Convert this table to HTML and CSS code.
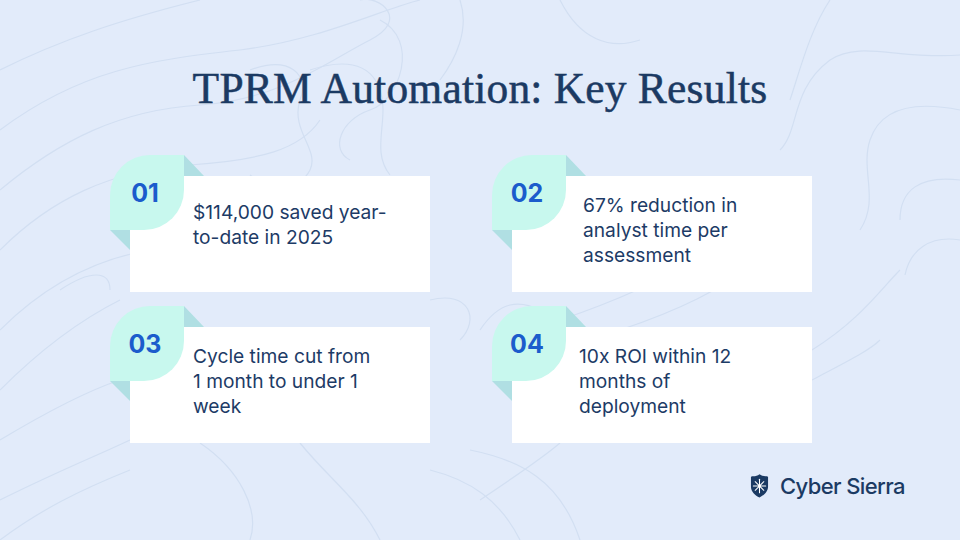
FILE: index.html
```html
<!DOCTYPE html>
<html lang="en">
<head>
<meta charset="utf-8">
<title>TPRM Automation: Key Results</title>
<link rel="stylesheet" href="styles.css">
</head>
<body>
<div class="slide">
  <svg class="contours" viewBox="0 0 960 540" width="960" height="540" aria-hidden="true">
    <g fill="none" stroke="#d2dff2" stroke-width="1.2">
      <path d="M0 70 C60 40 120 20 200 0"/>
      <path d="M0 130 C80 70 150 60 240 50 C320 40 380 10 420 0"/>
      <path d="M0 190 C60 140 120 110 200 105 C280 100 330 60 370 40 C410 20 380 -5 360 0"/>
      <path d="M0 250 C50 200 110 170 190 165 C260 160 300 150 320 120"/>
      <path d="M0 330 C40 290 90 260 150 250"/>
      <path d="M0 390 C40 350 80 320 120 300"/>
      <path d="M0 440 C50 410 90 390 120 380"/>
      <path d="M0 500 C60 470 110 450 130 440"/>
      <path d="M250 70 C290 55 310 75 300 100 C290 130 320 150 310 170 C300 190 270 190 250 175"/>
      <path d="M310 70 C340 60 370 60 380 90 C390 120 370 150 390 175"/>
      <path d="M460 0 C470 30 455 60 440 80"/>
      <path d="M380 20 C420 40 400 100 370 110 C340 120 330 150 350 160"/>
      <path d="M960 55 C900 60 860 40 830 60 C790 90 800 130 780 150"/>
      <path d="M960 110 C910 100 880 110 870 140 C860 170 880 200 860 230"/>
      <path d="M960 180 C920 175 900 190 900 220"/>
      <path d="M960 240 C930 235 910 250 905 275"/>
      <path d="M830 0 C810 30 800 70 790 100"/>
      <path d="M560 0 C580 40 610 50 640 40"/>
      <path d="M430 300 C470 290 480 320 460 340"/>
      <path d="M480 330 C500 300 520 300 540 310"/>
      <path d="M560 320 C620 300 660 280 720 250"/>
      <path d="M620 330 C680 310 720 290 760 260"/>
      <path d="M812 350 C860 320 880 290 900 270"/>
      <path d="M812 380 C850 360 870 350 880 340"/>
      <path d="M430 470 C470 480 500 500 520 540"/>
      <path d="M470 450 C520 460 560 480 580 540"/>
      <path d="M480 500 C510 480 540 460 560 443"/>
      <path d="M0 540 C40 510 80 490 130 470"/>
      <path d="M200 443 C240 470 260 510 250 540"/>
      <path d="M300 443 C330 480 360 500 380 540"/>
      <path d="M60 290 C90 270 110 270 110 290"/>
    </g>
  </svg>

  <h1 class="title">TPRM Automation: Key Results</h1>

  <div class="grid">
    <div class="card card--short">
      <div class="fold fold--top"></div>
      <div class="fold fold--left"></div>
      <div class="badge">01</div>
      <p class="card-text">$114,000 saved year-<br>to-date in 2025</p>
    </div>
    <div class="card card--right">
      <div class="fold fold--top"></div>
      <div class="fold fold--left"></div>
      <div class="badge">02</div>
      <p class="card-text">67% reduction in<br>analyst time per<br>assessment</p>
    </div>
    <div class="card">
      <div class="fold fold--top"></div>
      <div class="fold fold--left"></div>
      <div class="badge">03</div>
      <p class="card-text">Cycle time cut from<br>1 month to under 1<br>week</p>
    </div>
    <div class="card card--right4">
      <div class="fold fold--top"></div>
      <div class="fold fold--left"></div>
      <div class="badge">04</div>
      <p class="card-text">10x ROI within 12<br>months of<br>deployment</p>
    </div>
  </div>

  <div class="logo">
    <svg class="logo-mark" viewBox="0 0 20 25" width="19" height="24" aria-hidden="true">
      <path d="M2 2.2 C5 2.8 7.5 1.6 10 0 C12.5 1.6 15 2.8 18 2.2 L19 3 V13 C19 18.5 14.5 22.5 10 24.5 C5.5 22.5 1 18.5 1 13 V3 Z" fill="#1b3a63"/>
      <g stroke="#ffffff" stroke-width="1.1" stroke-linecap="round">
        <line x1="10" y1="5.5" x2="10" y2="19.5"/>
        <line x1="3.5" y1="12.5" x2="16.5" y2="12.5"/>
        <line x1="5.5" y1="8" x2="14.5" y2="17"/>
        <line x1="14.5" y1="8" x2="5.5" y2="17"/>
      </g>
      <circle cx="10" cy="12.5" r="1.6" fill="#ffffff"/>
    </svg>
    <span class="logo-text">Cyber Sierra</span>
  </div>
</div>
</body>
</html>
```

FILE: styles.css
```css
* { box-sizing: border-box; }

html, body {
  margin: 0;
  padding: 0;
}

body {
  width: 960px;
  height: 540px;
  overflow: hidden;
  font-family: Inter, "Noto Sans", "Liberation Sans", sans-serif;
}

.slide {
  position: relative;
  width: 960px;
  height: 540px;
  background: #e2ebfa;
  overflow: hidden;
  display: flex;
  flex-direction: column;
}

.contours {
  position: absolute;
  left: 0;
  top: 0;
}

.title {
  position: relative;
  margin: 64px 0 0;
  text-align: center;
  font-family: "Liberation Serif", "DejaVu Serif", serif;
  font-weight: 400;
  font-size: 43.5px;
  line-height: 48px;
  color: #1b3a63;
  -webkit-text-stroke: 0.5px #1b3a63;
  letter-spacing: 0.2px;
}

.grid {
  position: relative;
  display: grid;
  grid-template-columns: 300px 300px;
  grid-auto-rows: 116px;
  column-gap: 82px;
  row-gap: 35px;
  margin: 64px 0 0 130px;
}

.card {
  position: relative;
  background: #ffffff;
  padding: 17px 16px 0 63px;
}

.card--short {
  padding-top: 24px;
}

.card--right {
  padding-left: 71px;
}

.card--right4 {
  padding-left: 67px;
}

.badge {
  position: absolute;
  left: -20px;
  top: -21px;
  width: 74px;
  height: 75px;
  background: #c8f8ee;
  border-radius: 40px 0 40px 0;
  display: flex;
  align-items: center;
  justify-content: center;
  padding-right: 4px;
  font-weight: 700;
  font-size: 25px;
  color: #1b5ccc;
  z-index: 2;
}

.fold {
  position: absolute;
  width: 0;
  height: 0;
  z-index: 1;
}

.fold--top {
  left: 54px;
  top: -21px;
  border-left: 20px solid #b0dfe3;
  border-top: 21px solid transparent;
}

.fold--left {
  left: -20px;
  top: 54px;
  border-top: 20px solid #b0dfe3;
  border-left: 20px solid transparent;
}

.card-text {
  margin: 0;
  font-size: 19.2px;
  line-height: 25px;
  color: #1d3b66;
  font-weight: 400;
}

.logo {
  position: relative;
  display: flex;
  align-items: center;
  gap: 11px;
  margin: 30px 0 0 750px;
}

.logo-mark {
  display: block;
}

.logo-text {
  font-family: Inter, "Noto Sans", sans-serif;
  font-weight: 500;
  font-size: 22px;
  letter-spacing: -0.6px;
  color: #1b3a63;
}
```
